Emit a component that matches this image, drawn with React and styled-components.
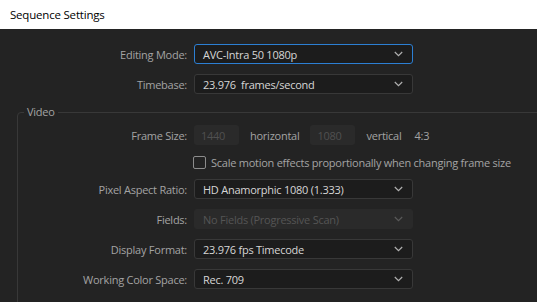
import React from "react";
import styled, { createGlobalStyle } from "styled-components";

const GlobalStyle = createGlobalStyle`
  html, body {
    margin: 0;
    padding: 0;
    background: #232323;
  }
  body {
    font-family: "Open Sans", "Noto Sans", sans-serif;
    font-size: 11px;
    letter-spacing: -0.25px;
    color: #a3a3a3;
    overflow: hidden;
  }
`;

const Window = styled.div`
  width: 537px;
  height: 302px;
  background: #232323;
  overflow: hidden;
`;

const TitleBar = styled.div`
  height: 29px;
  background: #fff;
  color: #000;
  display: flex;
  align-items: center;
  padding-left: 10px;
  font-size: 11.5px;
  letter-spacing: -0.2px;
`;

const Body = styled.div`
  padding-top: 15px;
  display: flex;
  flex-direction: column;
  gap: 10px;
`;

const Row = styled.div`
  display: grid;
  grid-template-columns: ${props => (props.$inset ? 176 : 194)}px auto;
  align-items: center;
  height: ${props => (props.$short ? 14 : 20)}px;
`;

const Label = styled.div`
  text-align: right;
  padding-right: 7px;
  color: #a3a3a3;
  white-space: nowrap;
`;

const Select = styled.div`
  box-sizing: border-box;
  width: 219px;
  height: 20px;
  display: flex;
  align-items: center;
  justify-content: space-between;
  padding: 0 9px 0 8px;
  border: 1px solid ${props => (props.$focused ? "#2c7fd3" : props.$disabled ? "#2a2a2a" : "#383838")};
  border-radius: 3px;
  background: ${props => (props.$disabled ? "#2a2a2a" : "#1c1c1c")};
  color: ${props => (props.$disabled ? "#555" : "#d6d6d6")};
  white-space: pre;
  svg {
    flex: none;
    opacity: ${props => (props.$disabled ? 0.35 : 1)};
  }
`;

const Group = styled.fieldset`
  margin: 0 -30px 0 17px;
  padding: 5px 0 20px 0;
  border: 1px solid #383838;
  border-radius: 4px;
  display: flex;
  flex-direction: column;
  gap: 10px;
`;

const Legend = styled.legend`
  margin-left: 6px;
  padding: 0 3px;
  line-height: 16px;
  color: #a3a3a3;
`;

const Inline = styled.div`
  display: flex;
  align-items: center;
  white-space: nowrap;
`;

const NumberBox = styled.div`
  box-sizing: border-box;
  width: 45px;
  height: 20px;
  padding-left: 7px;
  display: flex;
  align-items: center;
  background: #2a2a2a;
  border-radius: 3px;
  color: #505050;
`;

const Unit = styled.span`
  margin: 0 ${props => props.$right || 11}px 0 11px;
`;

const Check = styled.span`
  box-sizing: border-box;
  width: 13px;
  height: 13px;
  margin-left: -1px;
  margin-right: 5px;
  border: 1.5px solid #8c8c8c;
  border-radius: 2px;
`;

const Chevron = () => (
  <svg width="9" height="6" viewBox="0 0 9 6">
    <polyline points="0.8,1 4.5,4.6 8.2,1" fill="none" stroke="#b0b0b0" strokeWidth="1.2" />
  </svg>
);

const Field = ({ label, value, inset, focused, disabled }) => (
  <Row $inset={inset}>
    <Label>{label}</Label>
    <Select $focused={focused} $disabled={disabled}>
      <span>{value}</span>
      <Chevron />
    </Select>
  </Row>
);

export default function App() {
  return (
    <Window>
      <GlobalStyle />
      <TitleBar>Sequence Settings</TitleBar>
      <Body>
        <Field label="Editing Mode:" value="AVC-Intra 50 1080p" focused />
        <Field label="Timebase:" value="23.976  frames/second" />
        <Group>
          <Legend>Video</Legend>
          <Row $inset>
            <Label>Frame Size:</Label>
            <Inline>
              <NumberBox>1440</NumberBox>
              <Unit>horizontal</Unit>
              <NumberBox>1080</NumberBox>
              <Unit $right={13}>vertical</Unit>
              <span>4:3</span>
            </Inline>
          </Row>
          <Row $inset $short>
            <span />
            <Inline>
              <Check />
              <span>Scale motion effects proportionally when changing frame size</span>
            </Inline>
          </Row>
          <Field inset label="Pixel Aspect Ratio:" value="HD Anamorphic 1080 (1.333)" />
          <Field inset disabled label="Fields:" value="No Fields (Progressive Scan)" />
          <Field inset label="Display Format:" value="23.976 fps Timecode" />
          <Field inset label="Working Color Space:" value="Rec. 709" />
        </Group>
      </Body>
    </Window>
  );
}
